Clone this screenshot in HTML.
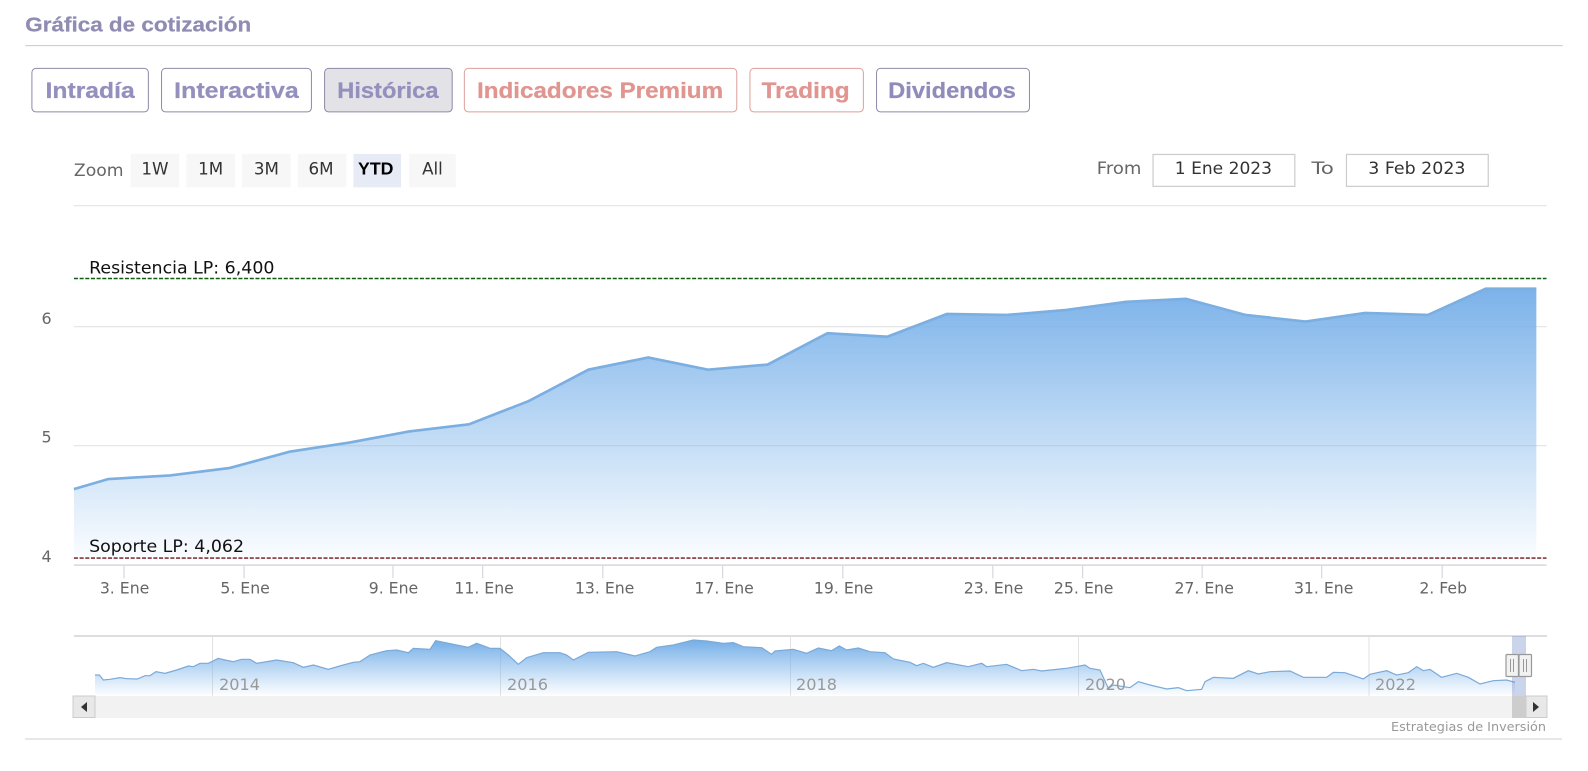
<!DOCTYPE html>
<html lang="es">
<head>
<meta charset="utf-8">
<title>Gráfica de cotización</title>
<style>
html,body{margin:0;padding:0;background:#fff;width:1588px;height:771px;overflow:hidden}
svg{display:block}
.h{font-family:"Liberation Sans",sans-serif;font-weight:700}
.c{font-family:"DejaVu Sans","Liberation Sans",sans-serif}
</style>
</head>
<body>
<svg width="1588" height="771" viewBox="0 0 1588 771" xmlns="http://www.w3.org/2000/svg">
<defs>
<linearGradient id="mg" gradientUnits="userSpaceOnUse" x1="0" y1="285" x2="0" y2="552">
<stop offset="0" stop-color="#7cb2e9"/>
<stop offset="1" stop-color="#7cb5ec" stop-opacity="0.03"/>
</linearGradient>
<linearGradient id="ng" gradientUnits="userSpaceOnUse" x1="0" y1="55" x2="0" y2="225">
<stop offset="0" stop-color="#6fabe6"/>
<stop offset="1" stop-color="#7cb5ec" stop-opacity="0.03"/>
</linearGradient>
</defs>
<rect width="1588" height="771" fill="#fff"/>

<g transform="scale(1.01276)">
<!-- heading -->
<text class="h" x="25" y="31" font-size="20.5" fill="#8f8bb3" stroke="#8f8bb3" stroke-width=".25" textLength="223" lengthAdjust="spacingAndGlyphs">Gráfica de cotización</text>
<line x1="25" x2="1543" y1="45" y2="45" stroke="#c8c8cc" stroke-width="1"/>

<!-- tab buttons -->
<g stroke="#8e8aa8" stroke-width="1" fill="#fff">
<rect x="31.5" y="67.5" width="115" height="43" rx="4"/>
<rect x="159.5" y="67.5" width="148" height="43" rx="4"/>
<rect x="320.5" y="67.5" width="126" height="43" rx="4" fill="#e3e3e7"/>
<rect x="865.5" y="67.5" width="151" height="43" rx="4"/>
</g>
<g stroke="#dd9f9b" stroke-width="1" fill="#fff">
<rect x="458.5" y="67.5" width="269" height="43" rx="4"/>
<rect x="740.5" y="67.5" width="112" height="43" rx="4"/>
</g>
<g class="h" font-size="21.7" stroke-width=".25">
<text x="45" y="97" fill="#9390bd" stroke="#9390bd" textLength="88" lengthAdjust="spacingAndGlyphs">Intradía</text>
<text x="172" y="97" fill="#9390bd" stroke="#9390bd" textLength="123" lengthAdjust="spacingAndGlyphs">Interactiva</text>
<text x="333" y="97" fill="#9390bd" stroke="#9390bd" textLength="100" lengthAdjust="spacingAndGlyphs">Histórica</text>
<text x="471" y="97" fill="#e09591" stroke="#e09591" textLength="243" lengthAdjust="spacingAndGlyphs">Indicadores Premium</text>
<text x="752" y="97" fill="#e09591" stroke="#e09591" textLength="87" lengthAdjust="spacingAndGlyphs">Trading</text>
<text x="877" y="97" fill="#8f8cbb" stroke="#8f8cbb" textLength="126" lengthAdjust="spacingAndGlyphs">Dividendos</text>
</g>

<!-- range selector -->
<text class="c" x="73" y="174" font-size="17" fill="#666" textLength="49" lengthAdjust="spacingAndGlyphs">Zoom</text>
<g fill="#f7f7f7">
<rect x="129" y="152" width="48" height="33"/>
<rect x="184" y="152" width="48" height="33"/>
<rect x="239" y="152" width="48" height="33"/>
<rect x="294" y="152" width="48" height="33"/>
<rect x="349" y="152" width="47" height="33" fill="#e6ebf5"/>
<rect x="404" y="152" width="46" height="33"/>
</g>
<g class="c" font-size="16.5" fill="#333" text-anchor="middle">
<text x="153" y="172.5">1W</text>
<text x="208" y="172.5">1M</text>
<text x="263" y="172.5">3M</text>
<text x="317" y="172.5">6M</text>
<text x="371" y="172.5" font-family="Liberation Sans,sans-serif" font-weight="700" font-size="17.5" fill="#000">YTD</text>
<text x="427" y="172.5">All</text>
</g>
<g class="c" font-size="16.5" fill="#666">
<text x="1083" y="172" textLength="44" lengthAdjust="spacingAndGlyphs">From</text>
<text x="1295" y="172" textLength="22" lengthAdjust="spacingAndGlyphs">To</text>
</g>
<g fill="#fff" stroke="#ccc" stroke-width="1.2">
<rect x="1138.5" y="152.5" width="140" height="31.5"/>
<rect x="1329.5" y="152.5" width="140" height="31.5"/>
</g>
<g class="c" font-size="16.5" fill="#333">
<text x="1160" y="172" textLength="96" lengthAdjust="spacingAndGlyphs">1 Ene 2023</text>
<text x="1351" y="172" textLength="96" lengthAdjust="spacingAndGlyphs">3 Feb 2023</text>
</g>

<!-- grid -->
<g stroke="#e6e6e6" stroke-width="1.2">
<line x1="73" x2="1527" y1="203" y2="203"/>
<line x1="73" x2="1527" y1="322.5" y2="322.5"/>
<line x1="73" x2="1527" y1="440" y2="440"/>
</g>
<line x1="73" x2="1527" y1="558" y2="558" stroke="#d5d8e0" stroke-width="1.4"/>
<g stroke="#d5d8e0" stroke-width="1.2">
<line x1="122.4" x2="122.4" y1="558" y2="571"/>
<line x1="241" x2="241" y1="558" y2="571"/>
<line x1="388" x2="388" y1="558" y2="571"/>
<line x1="476.6" x2="476.6" y1="558" y2="571"/>
<line x1="595.2" x2="595.2" y1="558" y2="571"/>
<line x1="713.5" x2="713.5" y1="558" y2="571"/>
<line x1="832.2" x2="832.2" y1="558" y2="571"/>
<line x1="980.3" x2="980.3" y1="558" y2="571"/>
<line x1="1069" x2="1069" y1="558" y2="571"/>
<line x1="1187" x2="1187" y1="558" y2="571"/>
<line x1="1305" x2="1305" y1="558" y2="571"/>
<line x1="1424" x2="1424" y1="558" y2="571"/>
</g>

<!-- main area -->
<path d="M73 483L107 473L168 469.5L227 462L286 446L345 437L404 426L463 419L522 396L581 365L640 353L699 365L758 360L817 329L876 332.5L935 310L994 311L1053 306L1112 298L1171 295L1230 311L1289 317.5L1348 309L1410 311L1467 285L1517 285V552H73Z" fill="url(#mg)"/>
<path d="M73 483L107 473L168 469.5L227 462L286 446L345 437L404 426L463 419L522 396L581 365L640 353L699 365L758 360L817 329L876 332.5L935 310L994 311L1053 306L1112 298L1171 295L1230 311L1289 317.5L1348 309L1410 311L1467 285L1517 285" fill="none" stroke="#7baee1" stroke-width="2.6"/>

<!-- plot lines -->
<line x1="73" x2="1527" y1="275" y2="275" stroke="#0f5f0f" stroke-width="1.4" stroke-dasharray="4 1.6"/>
<line x1="73" x2="1527" y1="551" y2="551" stroke="#701218" stroke-width="1.4" stroke-dasharray="4 1.6"/>
<g class="c" font-size="16.2" fill="#111">
<text x="88" y="270" textLength="183" lengthAdjust="spacingAndGlyphs">Resistencia LP: 6,400</text>
<text x="88" y="545" textLength="153" lengthAdjust="spacingAndGlyphs">Soporte LP: 4,062</text>
</g>

<!-- y labels -->
<g class="c" font-size="15.7" fill="#666">
<text x="41" y="320">6</text>
<text x="41" y="437">5</text>
<text x="41" y="555">4</text>
</g>

<!-- x labels -->
<g class="c" font-size="15.5" fill="#666" text-anchor="middle">
<text x="123" y="586">3. Ene</text>
<text x="242" y="586">5. Ene</text>
<text x="388.5" y="586">9. Ene</text>
<text x="478" y="586">11. Ene</text>
<text x="597" y="586">13. Ene</text>
<text x="715" y="586">17. Ene</text>
<text x="833" y="586">19. Ene</text>
<text x="981" y="586">23. Ene</text>
<text x="1070" y="586">25. Ene</text>
<text x="1189" y="586">27. Ene</text>
<text x="1307" y="586">31. Ene</text>
<text x="1425" y="586">2. Feb</text>
</g>
</g>

<!-- navigator : true pixel coordinates -->
<line x1="74" x2="1547" y1="636" y2="636" stroke="#d2d2d2" stroke-width="1.4"/>
<g stroke="#e2e2e2" stroke-width="1">
<line x1="212.5" x2="212.5" y1="636" y2="696"/>
<line x1="500.5" x2="500.5" y1="636" y2="696"/>
<line x1="790.5" x2="790.5" y1="636" y2="696"/>
<line x1="1078.5" x2="1078.5" y1="636" y2="696"/>
<line x1="1369" x2="1369" y1="636" y2="696"/>
</g>

<g transform="translate(60 620) scale(.33333)">
<path d="M105 165L118 165L130 180L150 178L180 173L200 176L232 177L255 167L270 167L288 155L315 160L350 150L385 138L400 140L420 130L445 130L475 115L495 120L520 125L545 118L570 118L590 130L650 120L700 128L730 142L760 135L805 148L850 135L880 127L900 125L930 105L980 92L1010 90L1045 98L1060 85L1110 88L1127 62L1190 75L1225 82L1250 70L1290 85L1320 85L1345 105L1375 133L1400 113L1450 98L1500 98L1520 105L1540 120L1585 97L1670 95L1725 108L1770 95L1790 82L1840 75L1900 60L1940 63L1990 70L2020 68L2050 80L2105 83L2135 103L2145 93L2200 88L2240 100L2275 84L2315 92L2338 78L2360 90L2395 84L2430 95L2475 98L2500 117L2550 127L2570 137L2590 130L2620 142L2660 128L2725 140L2765 130L2780 140L2840 133L2885 152L2920 148L2945 153L3000 147L3020 145L3075 135L3090 145L3120 150L3145 205L3160 195L3210 203L3235 185L3270 195L3320 207L3355 203L3380 212L3425 208L3435 185L3460 172L3520 175L3565 152L3595 162L3630 155L3690 153L3730 172L3800 172L3820 157L3855 158L3910 177L3930 163L3980 152L4010 165L4045 158L4070 140L4090 152L4110 148L4145 172L4190 160L4225 172L4260 192L4300 182L4340 180L4365 187V225H105Z" fill="url(#ng)"/>
<path d="M105 165L118 165L130 180L150 178L180 173L200 176L232 177L255 167L270 167L288 155L315 160L350 150L385 138L400 140L420 130L445 130L475 115L495 120L520 125L545 118L570 118L590 130L650 120L700 128L730 142L760 135L805 148L850 135L880 127L900 125L930 105L980 92L1010 90L1045 98L1060 85L1110 88L1127 62L1190 75L1225 82L1250 70L1290 85L1320 85L1345 105L1375 133L1400 113L1450 98L1500 98L1520 105L1540 120L1585 97L1670 95L1725 108L1770 95L1790 82L1840 75L1900 60L1940 63L1990 70L2020 68L2050 80L2105 83L2135 103L2145 93L2200 88L2240 100L2275 84L2315 92L2338 78L2360 90L2395 84L2430 95L2475 98L2500 117L2550 127L2570 137L2590 130L2620 142L2660 128L2725 140L2765 130L2780 140L2840 133L2885 152L2920 148L2945 153L3000 147L3020 145L3075 135L3090 145L3120 150L3145 205L3160 195L3210 203L3235 185L3270 195L3320 207L3355 203L3380 212L3425 208L3435 185L3460 172L3520 175L3565 152L3595 162L3630 155L3690 153L3730 172L3800 172L3820 157L3855 158L3910 177L3930 163L3980 152L4010 165L4045 158L4070 140L4090 152L4110 148L4145 172L4190 160L4225 172L4260 192L4300 182L4340 180L4365 187" fill="none" stroke="#7ba9d8" stroke-width="3.6"/>
</g>

<g class="c" font-size="15.7" fill="#999">
<text x="219" y="690" textLength="41" lengthAdjust="spacingAndGlyphs">2014</text>
<text x="507" y="690" textLength="41" lengthAdjust="spacingAndGlyphs">2016</text>
<text x="796" y="690" textLength="41" lengthAdjust="spacingAndGlyphs">2018</text>
<text x="1085" y="690" textLength="41" lengthAdjust="spacingAndGlyphs">2020</text>
<text x="1375" y="690" textLength="41" lengthAdjust="spacingAndGlyphs">2022</text>
</g>

<!-- scrollbar -->
<rect x="73" y="696" width="1474" height="22" fill="#f2f2f2"/>
<rect x="73" y="696" width="22" height="21.5" fill="#e8e8e8" stroke="#ccc" stroke-width="1"/>
<path d="M87 702V712L81 707Z" fill="#333"/>
<rect x="1526" y="696" width="21" height="21.5" fill="#e8e8e8" stroke="#ccc" stroke-width="1"/>
<path d="M1533 702V712L1539 707Z" fill="#333"/>
<rect x="1512" y="696" width="14" height="22" fill="#cdcdcd"/>
<rect x="1512" y="636" width="14" height="60" fill="#6685c2" fill-opacity=".35"/>

<!-- handles -->
<g fill="#f2f2f2" stroke="#999" stroke-width="1.2">
<rect x="1506" y="654.5" width="12.5" height="22" rx="1"/>
<rect x="1519" y="654.5" width="12.5" height="22" rx="1"/>
</g>
<g stroke="#999" stroke-width="1">
<line x1="1510.5" x2="1510.5" y1="659" y2="672"/>
<line x1="1513.5" x2="1513.5" y1="659" y2="672"/>
<line x1="1523.5" x2="1523.5" y1="659" y2="672"/>
<line x1="1526.5" x2="1526.5" y1="659" y2="672"/>
</g>

<text class="c" x="1391" y="731" font-size="12.4" fill="#999" textLength="155" lengthAdjust="spacingAndGlyphs">Estrategias de Inversión</text>
<line x1="25" x2="1562" y1="739" y2="739" stroke="#cfcfd2" stroke-width="1"/>
</svg>
</body>
</html>
